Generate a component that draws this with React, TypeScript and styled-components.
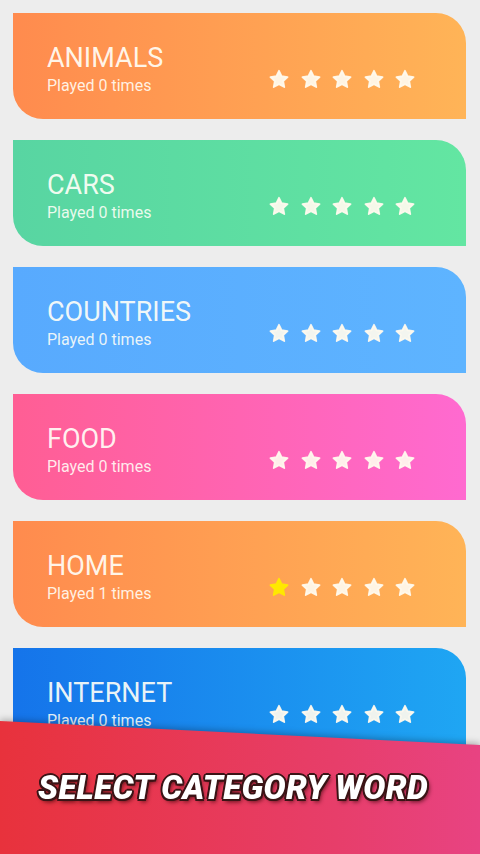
import React from "react";
import styled, { createGlobalStyle } from "styled-components";

const Global = createGlobalStyle`
  html, body { margin: 0; padding: 0; background: #ededed; }
  body { font-family: Roboto, "Liberation Sans", sans-serif; }
`;

const Screen = styled.div`
  position: relative;
  width: 480px;
  height: 854px;
  overflow: hidden;
  background: #ededed;
`;

const List = styled.div`
  display: flex;
  flex-direction: column;
  gap: 21px;
  padding: 13px 14px 0 13px;
`;

const Card = styled.div<{ $from: string; $to: string }>`
  display: flex;
  align-items: flex-start;
  justify-content: space-between;
  height: 106px;
  box-sizing: border-box;
  padding: 30px 51px 0 34px;
  background: linear-gradient(90deg, ${(p) => p.$from}, ${(p) => p.$to});
  border-radius: 0 30px 0 30px;
`;

const Info = styled.div`
  display: flex;
  flex-direction: column;
`;

const Title = styled.div`
  font-family: Roboto, "Liberation Sans", sans-serif;
  font-size: 27px;
  line-height: 30px;
  font-weight: 400;
  color: rgba(255, 255, 248, 0.92);
`;

const Sub = styled.div`
  margin-top: 3px;
  font-family: Roboto, "Liberation Sans", sans-serif;
  font-size: 16px;
  line-height: 20px;
  color: rgba(255, 255, 248, 0.88);
`;

const Stars = styled.div`
  display: flex;
  gap: 11.5px;
  margin-top: 26px;
`;

const StarSvg = styled.svg`
  width: 20px;
  height: 20px;
  display: block;
`;

const Banner = styled.div`
  position: absolute;
  left: 0;
  right: 0;
  bottom: 0;
  height: 133px;
  filter: drop-shadow(0 -2px 3px rgba(0, 0, 0, 0.25));
`;

const BannerFill = styled.div`
  height: 100%;
  display: flex;
  align-items: center;
  justify-content: center;
  box-sizing: border-box;
  background: linear-gradient(90deg, #e8323c, #e73e6a 70%, #e84382);
  clip-path: polygon(0 0, 100% 24px, 100% 100%, 0 100%);
`;

const BannerText = styled.div`
  font-family: Roboto, "Liberation Sans", sans-serif;
  font-weight: 900;
  font-style: italic;
  font-size: 33px;
  letter-spacing: 0.3px;
  color: #ffffff;
  margin-right: 14px;
  text-shadow: -1.5px -1.5px 0 #3b1416, 1.5px -1.5px 0 #3b1416, -1.5px 1.5px 0 #3b1416,
    1.5px 1.5px 0 #3b1416, 0 2px 0 #3b1416, 2px 0 0 #3b1416, -2px 0 0 #3b1416,
    0 -2px 0 #3b1416, 2px 3px 4px rgba(40, 0, 0, 0.7);
`;

const Star: React.FC<{ color: string }> = ({ color }) => {
  const pts: string[] = [];
  for (let i = 0; i < 10; i++) {
    const r = i % 2 === 0 ? 9 : 4.4;
    const a = (Math.PI / 5) * i - Math.PI / 2;
    pts.push(`${(10 + r * Math.cos(a)).toFixed(2)},${(10.8 + r * Math.sin(a)).toFixed(2)}`);
  }
  return (
    <StarSvg viewBox="0 0 20 20">
      <polygon
        points={pts.join(" ")}
        fill={color}
        stroke={color}
        strokeWidth={1.8}
        strokeLinejoin="round"
      />
    </StarSvg>
  );
};

const categories = [
  { name: "ANIMALS", played: 0, from: "#ff8b4e", to: "#ffb457", stars: 0 },
  { name: "CARS", played: 0, from: "#58d5a2", to: "#63e6a2", stars: 0 },
  { name: "COUNTRIES", played: 0, from: "#58aafe", to: "#5eb4ff", stars: 0 },
  { name: "FOOD", played: 0, from: "#ff5e94", to: "#ff6ad0", stars: 0 },
  { name: "HOME", played: 1, from: "#ff8b4e", to: "#ffb457", stars: 1 },
  { name: "INTERNET", played: 0, from: "#1574ea", to: "#1fa6f3", stars: 0 },
];

export default function App() {
  return (
    <>
      <Global />
      <Screen>
        <List>
          {categories.map((c) => (
            <Card key={c.name} $from={c.from} $to={c.to}>
              <Info>
                <Title>{c.name}</Title>
                <Sub>Played {c.played} times</Sub>
              </Info>
              <Stars>
                {[0, 1, 2, 3, 4].map((i) => (
                  <Star key={i} color={i < c.stars ? "#ffe800" : "rgba(255,250,238,0.93)"} />
                ))}
              </Stars>
            </Card>
          ))}
        </List>
        <Banner>
          <BannerFill>
            <BannerText>SELECT CATEGORY WORD</BannerText>
          </BannerFill>
        </Banner>
      </Screen>
    </>
  );
}
